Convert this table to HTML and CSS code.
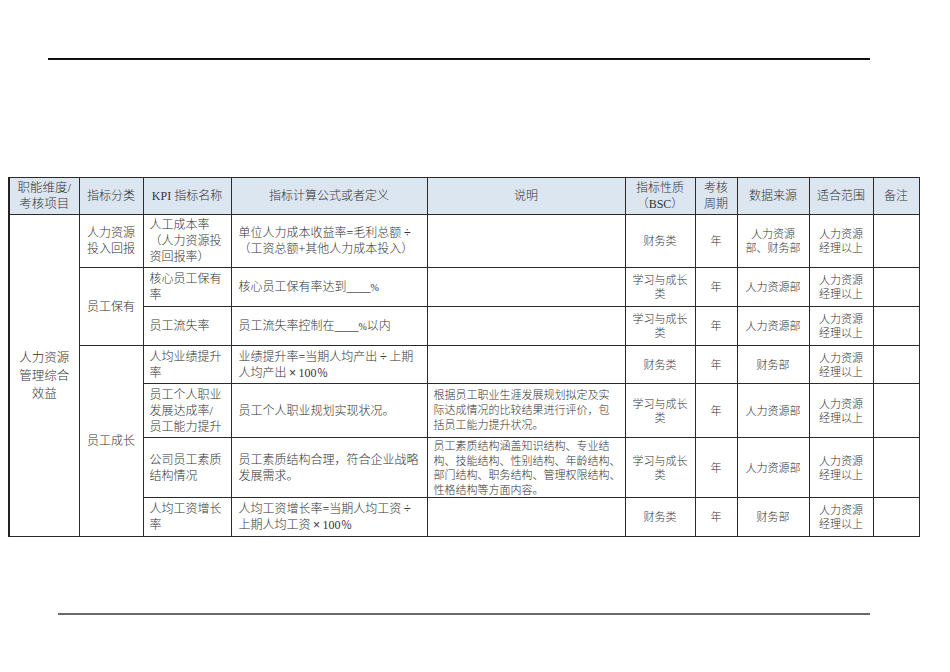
FILE: index.html
```html
<!DOCTYPE html>
<html lang="zh-CN">
<head>
<meta charset="utf-8">
<title>KPI</title>
<link rel="stylesheet" href="styles.css">
</head>
<body>
<div class="page">
  <div class="rule-top"></div>
  <table class="kpi">
    <colgroup>
      <col class="c1"><col class="c2"><col class="c3"><col class="c4"><col class="c5">
      <col class="c6"><col class="c7"><col class="c8"><col class="c9"><col class="c10">
    </colgroup>
    <thead>
      <tr class="hd">
        <th class="hdim">职能维度/<br>考核项目</th>
        <th>指标分类</th>
        <th>KPI 指标名称</th>
        <th>指标计算公式或者定义</th>
        <th>说明</th>
        <th>指标性质<br>（BSC）</th>
        <th>考核<br>周期</th>
        <th>数据来源</th>
        <th>适合范围</th>
        <th>备注</th>
      </tr>
    </thead>
    <tbody>
      <tr class="r1">
        <td rowspan="7" class="dim">人力资源<br>管理综合<br>效益</td>
        <td class="cat">人力资源<br>投入回报</td>
        <td class="name">人工成本率<br>（人力资源投<br>资回报率）</td>
        <td class="formula">单位人力成本收益率=毛利总额<span class="op">÷</span><br>（工资总额+其他人力成本投入）</td>
        <td class="note"></td>
        <td class="sm">财务类</td>
        <td class="sm">年</td>
        <td class="sm">人力资源<br>部、财务部</td>
        <td class="sm">人力资源<br>经理以上</td>
        <td></td>
      </tr>
      <tr class="r2">
        <td rowspan="2" class="cat">员工保有</td>
        <td class="name">核心员工保有<br>率</td>
        <td class="formula">核心员工保有率达到<span class="blank">____</span><span class="pct">%</span></td>
        <td class="note"></td>
        <td class="sm">学习与成长<br>类</td>
        <td class="sm">年</td>
        <td class="sm">人力资源部</td>
        <td class="sm">人力资源<br>经理以上</td>
        <td></td>
      </tr>
      <tr class="r3">
        <td class="name">员工流失率</td>
        <td class="formula">员工流失率控制在<span class="blank">____</span><span class="pct">%</span>以内</td>
        <td class="note"></td>
        <td class="sm">学习与成长<br>类</td>
        <td class="sm">年</td>
        <td class="sm">人力资源部</td>
        <td class="sm">人力资源<br>经理以上</td>
        <td></td>
      </tr>
      <tr class="r4">
        <td rowspan="4" class="cat">员工成长</td>
        <td class="name">人均业绩提升<br>率</td>
        <td class="formula">业绩提升率=当期人均产出<span class="op">÷</span>上期<br>人均产出<span class="op">×</span>100<span class="fw">％</span></td>
        <td class="note"></td>
        <td class="sm">财务类</td>
        <td class="sm">年</td>
        <td class="sm">财务部</td>
        <td class="sm">人力资源<br>经理以上</td>
        <td></td>
      </tr>
      <tr class="r5">
        <td class="name">员工个人职业<br>发展达成率/<br>员工能力提升</td>
        <td class="formula">员工个人职业规划实现状况。</td>
        <td class="note">根据员工职业生涯发展规划拟定及实<br>际达成情况的比较结果进行评价，包<br>括员工能力提升状况。</td>
        <td class="sm">学习与成长<br>类</td>
        <td class="sm">年</td>
        <td class="sm">人力资源部</td>
        <td class="sm">人力资源<br>经理以上</td>
        <td></td>
      </tr>
      <tr class="r6">
        <td class="name">公司员工素质<br>结构情况</td>
        <td class="formula">员工素质结构合理，符合企业战略<br>发展需求。</td>
        <td class="note dense">员工素质结构涵盖知识结构、专业结<br>构、技能结构、性别结构、年龄结构、<br>部门结构、职务结构、管理权限结构、<br>性格结构等方面内容。</td>
        <td class="sm">学习与成长<br>类</td>
        <td class="sm">年</td>
        <td class="sm">人力资源部</td>
        <td class="sm">人力资源<br>经理以上</td>
        <td></td>
      </tr>
      <tr class="r7">
        <td class="name">人均工资增长<br>率</td>
        <td class="formula">人均工资增长率=当期人均工资<span class="op">÷</span><br>上期人均工资<span class="op">×</span>100<span class="fw">％</span></td>
        <td class="note"></td>
        <td class="sm">财务类</td>
        <td class="sm">年</td>
        <td class="sm">财务部</td>
        <td class="sm">人力资源<br>经理以上</td>
        <td></td>
      </tr>
    </tbody>
  </table>
  <div class="rule-bottom"></div>
</div>
</body>
</html>
```
FILE: styles.css
```css
html, body {
  margin: 0;
  padding: 0;
  background: #ffffff;
}

.page {
  width: 950px;
  height: 672px;
  padding-top: 58px;
  box-sizing: border-box;
  font-family: "Liberation Serif", "Noto Sans CJK SC", serif;
  color: #333333;
}

.rule-top {
  margin-left: 48px;
  width: 822px;
  height: 2px;
  background: #111;
}

.rule-bottom {
  margin-left: 58px;
  width: 812px;
  height: 2px;
  margin-top: 76px;
  background: #6a6a6a;
}

.kpi {
  margin-top: 117px;
  margin-left: 8px;
  border-collapse: collapse;
  table-layout: fixed;
  width: 910px;
  border-left: 2px solid #222;
}

.c1 { width: 70px; }
.c2 { width: 64px; }
.c3 { width: 88px; }
.c4 { width: 196px; }
.c5 { width: 198px; }
.c6 { width: 70px; }
.c7 { width: 42px; }
.c8 { width: 72px; }
.c9 { width: 64px; }
.c10 { width: 46px; }

.kpi th,
.kpi td {
  border: 1px solid #2b2b2b;
  padding: 0 4px;
  vertical-align: middle;
  text-align: center;
  font-size: 12px;
  line-height: 16px;
  font-weight: 300;
}

.kpi th {
  background: #dce6f1;
  color: #333;
}

.kpi th.hdim {
  font-size: 12.5px;
}

.hd { height: 37px; }
.r1 { height: 53px; }
.r2 { height: 39px; }
.r3 { height: 39px; }
.r4 { height: 38px; }
.r5 { height: 54px; }
.r6 { height: 59px; }
.r7 { height: 39px; }

.kpi td.dim {
  line-height: 18px;
  font-size: 12.5px;
}

.kpi td.name {
  text-align: left;
  padding-left: 6px;
}

.kpi td.formula {
  text-align: left;
  padding-left: 7px;
}

.kpi td.note {
  text-align: left;
  padding-left: 6px;
  font-size: 11px;
  line-height: 15px;
}

.kpi td.note.dense {
  line-height: 14.5px;
  vertical-align: top;
  padding-top: 1px;
}

.kpi td.sm {
  font-size: 11px;
  line-height: 14px;
}

.op {
  display: inline-block;
  width: 12px;
  text-align: center;
  font-family: "Liberation Sans", sans-serif;
}

.fw {
  display: inline-block;
  width: 12px;
  text-align: center;
  font-family: "Liberation Serif", serif;
  font-size: 11px;
}

.pct {
  font-size: 10px;
}
```
